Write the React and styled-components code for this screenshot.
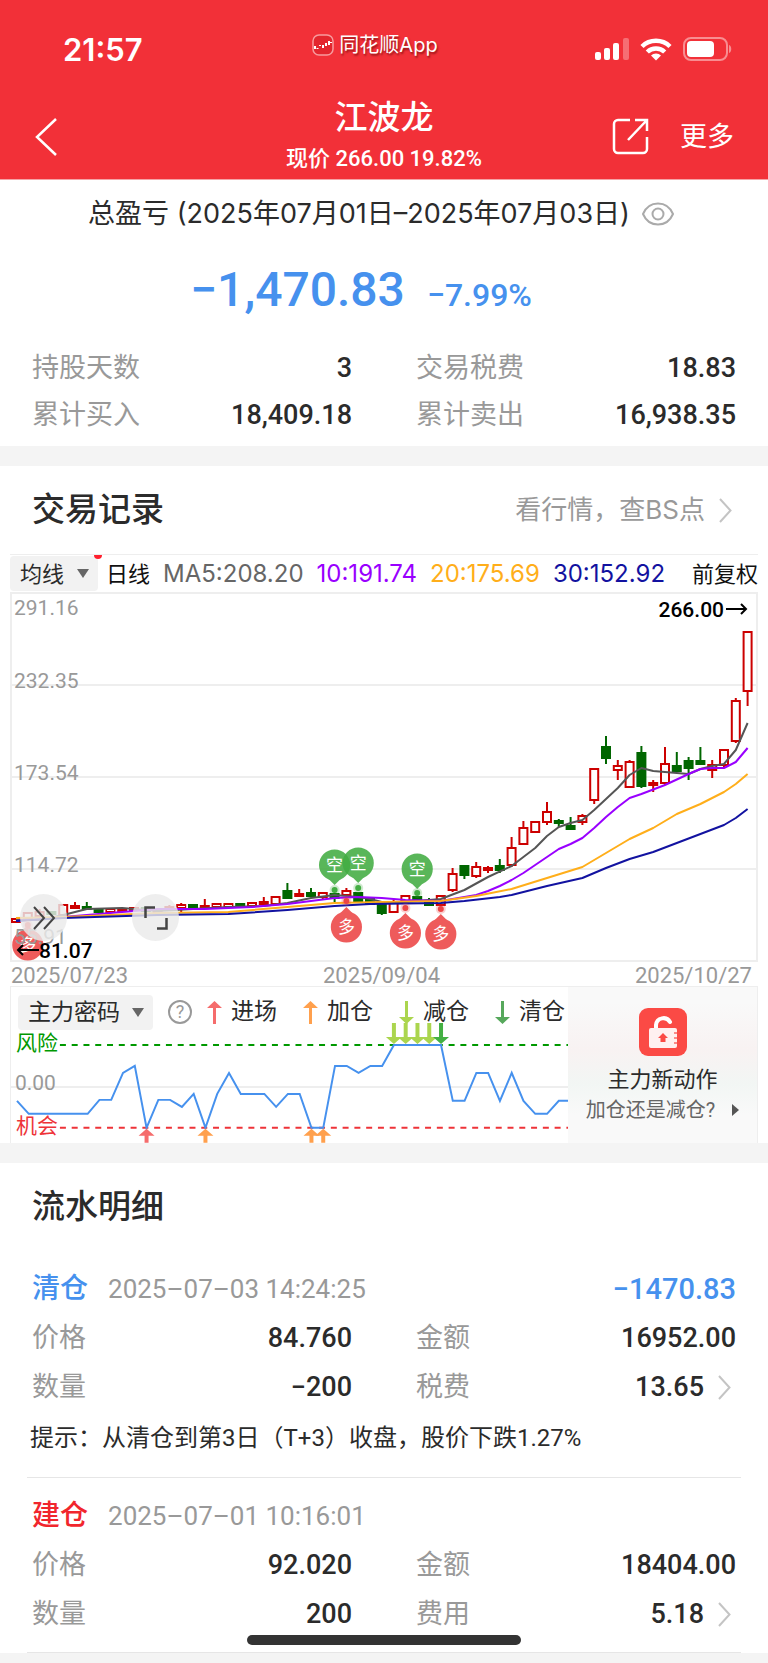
import { useState } from "react"
import styled, { createGlobalStyle } from "styled-components";

const GlobalStyle = createGlobalStyle`
* {
  box-sizing: border-box;
}
body {
  margin: 0;
  background: #f4f4f4;
  color: #2b2b2b;
  font-family: Roboto, "Noto Sans CJK SC", sans-serif;
}
h1, h2, p, dl, dd {
  margin: 0;
  font-weight: 400;
}
button, select {
  font-family: inherit;
  color: inherit;
  border: none;
  background: none;
  padding: 0;
  cursor: pointer;
}
svg {
  display: block;
  flex-shrink: 0;
}
`;

const Page = styled.div`
position: relative;
background: #f4f4f4;
padding-bottom: 9px;
`;

/* header */
const Header = styled.header`
background: #f23038;
color: white;
border-bottom: 1px solid #f5a3a6;
`;
const StatusBar = styled.div`
display: grid;
grid-template-columns: 1fr auto 1fr;
align-items: center;
height: 94px;
padding: 4px 36px 0;
`;
const Clock = styled.span`
padding-left: 27px;
font-family: Inter, sans-serif;
font-size: 31px;
font-weight: 600;
`;
const Brand = styled.div`
display: flex;
align-items: center;
gap: 5px;
padding-right: 18px;
padding-bottom: 8px;
font-family: Inter, "Noto Sans CJK SC", sans-serif;
font-size: 20px;
line-height: 28px;
text-shadow: 1px 2px 2px rgba(90, 0, 0, 0.6);
`;
const Signals = styled.div`
display: flex;
justify-content: flex-end;
align-items: center;
gap: 11px;
`;
const Nav = styled.nav`
display: grid;
grid-template-columns: 1fr auto 1fr;
align-items: center;
height: 85px;
padding: 0 34px;
`;
const NavTitle = styled.div`
text-align: center;
`;
const StockName = styled.h1`
font-size: 33px;
line-height: 44px;
font-weight: 500;
`;
const StockPrice = styled.p`
font-size: 22px;
line-height: 38px;
font-weight: 500;
`;
const NavActions = styled.div`
display: flex;
justify-content: flex-end;
align-items: center;
gap: 31px;
`;
const NavButton = styled.button`
font-size: 27px;
line-height: 40px;
`;

/* shared */
const Section = styled.section`
background: white;
margin-bottom: 20px;
`;
const SectionHead = styled.div`
display: flex;
justify-content: space-between;
align-items: center;
height: 88px;
padding: 0 36px 0 32px;
`;
const SectionTitle = styled.h2`
font-size: 33px;
line-height: 48px;
font-weight: 500;
`;
const MoreLink = styled.a`
display: flex;
align-items: center;
gap: 14px;
font-family: Inter, "Noto Sans CJK SC", sans-serif;
font-size: 26px;
line-height: 36px;
color: #999999;
text-decoration: none;
`;
const Stats = styled.dl`
display: grid;
grid-template-columns: 1fr 1fr;
column-gap: 64px;
padding: 0 32px;
`;
const Stat = styled.div`
display: flex;
justify-content: space-between;
align-items: center;
height: ${props => props.$height}px;
font-size: 27px;
line-height: 36px;
`;
const StatName = styled.dt`
color: #999999;
`;
const StatValue = styled.dd`
display: flex;
align-items: center;
gap: 14px;
font-size: 27px;
font-weight: 500;
`;
const FeeButton = styled.button`
display: flex;
align-items: center;
gap: 14px;
padding-right: 5px;
font-size: 27px;
font-weight: 500;
`;

/* summary */
const Summary = styled(Section)`
padding: 12px 0 8px;
`;
const Period = styled.div`
display: flex;
justify-content: center;
align-items: center;
gap: 12px;
padding-right: 6px;
font-family: Inter, "Noto Sans CJK SC", sans-serif;
font-size: 27px;
line-height: 44px;
`;
const Profit = styled.div`
display: flex;
justify-content: center;
align-items: baseline;
gap: 22px;
height: 60px;
margin: 24px 0;
padding-right: 46px;
color: #4691ee;
font-weight: 500;
font-size: 32px;
line-height: 60px;
`;
const ProfitValue = styled.span`
font-size: 48px;
`;

/* chart */
const ChartBox = styled.div`
margin: 0 10px;
border-top: 1px solid #eeeeee;
`;
const ChartBar = styled.div`
position: relative;
display: flex;
align-items: center;
height: 37px;
font-family: Inter, "Noto Sans CJK SC", sans-serif;
`;
const Picker = styled.label`
position: relative;
display: flex;
align-items: center;
flex-shrink: 0;
width: ${props => props.$width}px;
height: 35px;
border-radius: 4px;
background: #f2f2f2;
`;
const PickerSelect = styled.select`
appearance: none;
width: 100%;
height: 35px;
padding-left: 10px;
font-size: ${props => props.$size}px;
outline: none;
`;
const PickerCaret = styled.svg`
position: absolute;
right: 9px;
pointer-events: none;
`;
const NewDot = styled.i`
position: absolute;
left: 84px;
top: 0;
width: 8px;
height: 4px;
border-radius: 0 0 4px 4px;
background: #ff1f2e;
`;
const Averages = styled.div`
display: flex;
flex: 1;
align-items: center;
gap: 13px;
padding-left: 8px;
line-height: 32px;
white-space: nowrap;
`;
const Average = styled.span`
color: ${props => props.color};
font-size: 24px;
`;
const ChartMode = styled.span`
color: #111111;
font-size: 22px;
&:last-child{
   margin-left: auto;
}
`;
const Canvas = styled.div`
position: relative;
`;
const RoundButton = styled.button`
position: absolute;
left: ${props => props.$left}px;
bottom: 21px;
display: flex;
justify-content: center;
align-items: center;
width: 47px;
height: 47px;
border-radius: 50%;
background: rgba(234, 234, 234, 0.82);
`;
const Dates = styled.div`
display: flex;
justify-content: space-between;
height: 24px;
padding: 0 6px 0 1px;
color: #999999;
font-size: 22px;
line-height: 28px;
`;
const Indicator = styled.div`
display: grid;
grid-template-columns: minmax(0, 1fr) 189px;
border: 1px solid #eeeeee;
border-bottom: none;
`;
const Legend = styled.div`
display: flex;
align-items: center;
gap: 15px;
height: 43px;
padding: 7px 0 0 7px;
font-size: 23px;
line-height: 32px;
white-space: nowrap;
`;
const LegendItems = styled.div`
display: flex;
gap: 26px;
`;
const LegendItem = styled.span`
display: flex;
align-items: center;
gap: 9px;
`;
const HelpButton = styled.button`
flex-shrink: 0;
width: 24px;
height: 24px;
border: 2px solid #999999;
border-radius: 50%;
color: #999999;
font-size: 18px;
line-height: 20px;
`;
const Promo = styled.a`
display: flex;
flex-direction: column;
align-items: center;
padding-top: 21px;
background: linear-gradient(180deg, #f9f9f9 10%, #f8f2f2 40%, #f2f6f4 62%, #f9f9f9 82%);
color: #2b2b2b;
text-decoration: none;
`;
const PromoTitle = styled.span`
margin-top: 8px;
font-size: 22px;
line-height: 32px;
`;
const PromoText = styled.span`
display: flex;
align-items: center;
gap: 17px;
color: #666666;
font-size: 20px;
line-height: 28px;
`;

/* trade list */
const Trades = styled(Section)`
margin-bottom: 0;
`;
const Trade = styled.article`
padding-top: 13px;
padding-bottom: 14px;
background: linear-gradient(#e6e6e6, #e6e6e6) bottom / calc(100% - 54px) 1px no-repeat;
`;
const TradeHead = styled.div`
display: flex;
align-items: center;
height: 50px;
padding: 0 32px;
line-height: 36px;
`;
const TradeKind = styled.span`
color: ${props => props.color};
font-size: 28px;
font-weight: 500;
`;
const TradeTime = styled.time`
margin-left: 20px;
color: #999999;
font-size: 26px;
`;
const TradeProfit = styled.span`
margin-left: auto;
color: #4691ee;
font-size: 29px;
font-weight: 500;
`;
const Tip = styled.p`
padding: 0 30px;
font-size: 24px;
line-height: 52px;
`;
const HomeBar = styled.div`
position: absolute;
left: 50%;
bottom: 17px;
width: 274px;
height: 10px;
margin-left: -137px;
border-radius: 5px;
background: #333333;
`;

// [top, bottom, high, low, up] of every day
const candles = [
  [327, 330, 327, 330, 1], [321, 326, 321, 326, 1], [320, 324, 317, 324, 1], [320, 322, 320, 322, 0],
  [313, 323, 312, 323, 1], [314, 316, 310, 316, 1], [315, 317, 310, 317, 0], [317, 320, 317, 320, 0],
  [317, 320, 316, 320, 1], [317, 319, 317, 319, 1], [316, 318, 316, 318, 1], [316, 319, 316, 319, 0],
  [318, 320, 318, 320, 1], [315, 317, 313, 317, 1], [313, 316, 311, 321, 1], [313, 316, 313, 316, 0],
  [314, 316, 307, 316, 1], [312, 315, 312, 315, 1], [312, 315, 311, 315, 1], [312, 314, 311, 314, 0],
  [311, 314, 311, 314, 1], [310, 312, 305, 312, 1], [305, 312, 305, 312, 1], [299, 306, 291, 307, 0],
  [302, 304, 297, 304, 1], [301, 304, 296, 304, 0], [301, 305, 301, 307, 1], [302, 306, 302, 310, 0],
  [299, 303, 296, 303, 1], [301, 309, 301, 309, 0], [307, 312, 307, 312, 0], [313, 321, 310, 323, 0],
  [311, 320, 308, 320, 1], [304, 309, 304, 309, 1], [305, 308, 304, 308, 0], [311, 313, 306, 313, 0],
  [304, 313, 304, 313, 1], [282, 298, 276, 300, 1], [274, 283, 274, 287, 0], [275, 284, 270, 286, 1],
  [276, 278, 274, 281, 1], [274, 278, 267, 281, 0], [256, 273, 245, 275, 1], [236, 252, 229, 252, 1],
  [230, 240, 230, 240, 1], [220, 230, 210, 233, 1], [229, 231, 227, 235, 0], [234, 237, 225, 237, 0],
  [224, 230, 222, 233, 1], [177, 208, 177, 212, 1], [155, 166, 144, 172, 0], [174, 178, 168, 188, 1],
  [170, 195, 168, 195, 1], [161, 194, 154, 196, 0], [191, 193, 188, 200, 1], [172, 191, 155, 193, 1],
  [174, 179, 160, 179, 0], [169, 176, 165, 188, 0], [169, 172, 155, 172, 0], [173, 178, 168, 186, 1],
  [158, 173, 158, 176, 1], [109, 149, 106, 151, 1], [40, 99, 40, 114, 1],
];

// [day, y]
const ma5 = [[0, 328], [2, 328], [4, 323], [6, 317], [9, 316], [12, 319], [15, 317], [18, 315], [21, 314], [23, 311], [25, 306], [27, 303], [29, 305], [30, 307], [31, 310], [33, 310], [36, 307], [38, 298], [40, 285], [42, 274], [43, 265], [44, 256], [45, 244], [46, 235], [47, 231], [48, 228], [49, 218], [50, 207], [51, 196], [52, 183], [53, 176], [54, 179], [55, 180], [57, 182], [58, 177], [59, 174], [60, 172], [61, 158], [62, 131]];
const ma10 = [[0, 329], [4, 325], [8, 321], [12, 317], [16, 317], [20, 315], [23, 312], [25, 309], [27, 306], [29, 305], [31, 306], [33, 308], [36, 309], [38, 305], [39, 303], [40, 299], [41, 294], [42, 288], [43, 281], [44, 273], [45, 265], [46, 257], [47, 252], [48, 246], [49, 236], [50, 225], [51, 215], [52, 206], [53, 202], [55, 193], [57, 182], [58, 177], [59, 176], [60, 176], [61, 170], [62, 156]];
const ma20 = [[0, 326], [4, 325], [12, 321], [18, 320], [23, 315], [27, 311], [31, 310], [36, 309], [39, 304], [42, 297], [45, 286], [48, 275], [50, 261], [52, 247], [54, 236], [56, 222], [58, 212], [59, 206], [60, 200], [61, 192], [62, 182]];
const ma30 = [[0, 329], [4, 326], [12, 323], [18, 322], [23, 318], [27, 314], [30, 312], [36, 311], [38, 309], [41, 305], [42, 303], [45, 294], [48, 286], [50, 276], [52, 267], [54, 260], [56, 251], [58, 242], [60, 233], [61, 226], [62, 217]];

const force = [[0, 71], [1, 84], [6, 84], [7, 70], [8, 70], [9, 43], [10, 36], [11, 98], [12, 70], [13, 70], [14, 77], [15, 64], [16, 98], [17, 64], [18, 43], [19, 64], [21, 64], [22, 77], [23, 64], [24, 64], [25, 98], [26, 98], [27, 36], [28, 36], [29, 43], [30, 36], [31, 36], [32, 15], [36, 15], [37, 71], [38, 71], [39, 43], [40, 43], [41, 71], [42, 43], [43, 71], [44, 84], [45, 84], [46, 71], [47, 71]];

// [day, circle y, dot y]
const shorts = [[27, 273, 298], [29, 271, 296], [34, 277, 301]];
const longs = [[1, 353, 333], [28, 335, 309], [33, 341, 316], [36, 342, 317]];

const dayX = (day) => day * 11.8 + 6;
const toPoints = (list) => list.map(([day, y]) => `${dayX(day)},${y}`).join(" ");

const trades = [
  {
    kind: "清仓", color: "#4691ee", time: "2025–07–03 14:24:25", profit: "−1470.83",
    price: "84.760", amount: "16952.00", count: "−200", feeName: "税费", fee: "13.65",
    tip: "提示：从清仓到第3日（T+3）收盘，股价下跌1.27%",
  },
  {
    kind: "建仓", color: "#f1262d", time: "2025–07–01 10:16:01",
    price: "92.020", amount: "18404.00", count: "200", feeName: "费用", fee: "5.18",
  },
];

function Chevron() {
  return <svg width="13" height="25" viewBox="0 0 13 25" fill="none" stroke="#c4c4c4" strokeWidth="2">
    <path d="M1 1 L11.5 12.5 L1 24" />
  </svg>
}

function Arrow({ color, down }) {
  return <svg width="15" height="23" viewBox="0 0 15 23" fill={color}>
    <path d={down ? "M6 0h3v16h6L7.500 23L0 16h6z" : "M6 23h3V7h6L7.500 0L0 7h6z"} />
  </svg>
}

function Marker({ day, y, dot, long }) {
  const x = dayX(day);
  const color = long ? "#ec4545" : "#43ad43";
  const side = long ? -1 : 1;
  return <g>
    <g fill={color} opacity="0.88">
      <circle cx={x} cy={y} r="15.600" />
      <path d={`M${x - 6} ${y + side * 14} L${x} ${y + side * 20} L${x + 6} ${y + side * 14}z`} />
    </g>
    <circle cx={x} cy={dot} r="5" fill={color} opacity="0.25" />
    <circle cx={x} cy={dot} r="3" fill={color} />
    <text x={x} y={y + 6} fill="white" fontSize="17" textAnchor="middle">{long ? "多" : "空"}</text>
  </g>
}

function PriceChart() {
  return <svg width="100%" viewBox="0 0 748 370" fill="none" fontSize="21">
    <rect x="1" y="1" width="746" height="368" stroke="#eeeeee" strokeWidth="2" />
    <path d="M1 93H747M1 185H747M1 277H747" stroke="#eeeeee" strokeWidth="2" />
    {candles.map(([top, bottom, high, low, up], day) => {
      const x = dayX(day);
      const color = up ? "#cc0000" : "#006600";
      return <g key={day} stroke={color} strokeWidth="2">
        <path d={`M${x} ${high}V${top}M${x} ${bottom}V${low}`} />
        <rect x={x - 4} y={top} width="8" height={bottom - top} fill={up ? "white" : color} />
      </g>
    })}
    <g strokeWidth="2" strokeLinejoin="round">
      <polyline points={toPoints(ma5)} stroke="#555555" />
      <polyline points={toPoints(ma10)} stroke="#9900ff" />
      <polyline points={toPoints(ma20)} stroke="#ffae1a" />
      <polyline points={toPoints(ma30)} stroke="#1212a0" />
    </g>
    {shorts.map(([day, y, dot]) => <Marker key={day} day={day} y={y} dot={dot} />)}
    {longs.map(([day, y, dot]) => <Marker key={day} day={day} y={y} dot={dot} long />)}
    <g fill="#999999">
      <text x="4" y="23">291.16</text>
      <text x="4" y="96">232.35</text>
      <text x="4" y="188">173.54</text>
      <text x="4" y="280">114.72</text>
      <text x="4" y="352">55.91</text>
    </g>
    <g fill="black" fontWeight="500">
      <text x="29" y="366">81.07</text>
      <text x="714" y="25" textAnchor="end">266.00</text>
    </g>
    <path d="M29 358H8M13 353L8 358L13 363M716 17H736M731 12L736 17L731 22" stroke="black" strokeWidth="2" />
  </svg>
}

function ForceChart() {
  return <svg width="100%" viewBox="0 0 558 113" fill="none" fontSize="21" overflow="visible">
    <path d="M0 57H558" stroke="#eeeeee" strokeWidth="2" />
    <path d="M49 15H558" stroke="#009900" strokeWidth="2" strokeDasharray="6 5.8" />
    <path d="M49 98H558" stroke="#ee3338" strokeWidth="2" strokeDasharray="6 5.8" />
    <polyline points={toPoints(force)} stroke="#4691ee" strokeWidth="2" />
    <text x="5" y="20" fill="#009900">风险</text>
    <text x="4" y="60" fill="#999999">0.00</text>
    <text x="5" y="103" fill="#ee3338">机会</text>
    {[11, 16, 25, 26].map((day) => (
      <path key={day} transform={`translate(${dayX(day)} 99)`} fill={day === 11 ? "#f56c6c" : "#ffa04d"} d="M0 0L8 7H2V14H-2V7H-8z" />
    ))}
    {[32, 33, 34, 35, 36].map((day) => (
      <path key={day} transform={`translate(${dayX(day)} -7)`} fill={day === 36 ? "#43b043" : "#abd54e"} d="M-2 0H2V14H8L0 21L-8 14H-2z" />
    ))}
  </svg>
}

function LineTypePicker({ label, options, width, size }) {
  const [value, setValue] = useState(options[0])
  return <Picker $width={width}>
    <PickerSelect $size={size} aria-label={label} value={value} onChange={(e) => setValue(e.target.value)}>
      {options.map((o) => <option key={o}>{o}</option>)}
    </PickerSelect>
    <PickerCaret width="12" height="9" viewBox="0 0 12 9" fill="#666666"><path d="M0 0H12L6 9z" /></PickerCaret>
  </Picker>
}

function TradeItem({ trade }) {
  return <Trade>
    <TradeHead>
      <TradeKind color={trade.color}>{trade.kind}</TradeKind>
      <TradeTime>{trade.time}</TradeTime>
      {trade.profit && <TradeProfit>{trade.profit}</TradeProfit>}
    </TradeHead>
    <Stats>
      <Stat $height={49}><StatName>价格</StatName><StatValue>{trade.price}</StatValue></Stat>
      <Stat $height={49}><StatName>金额</StatName><StatValue>{trade.amount}</StatValue></Stat>
      <Stat $height={49}><StatName>数量</StatName><StatValue>{trade.count}</StatValue></Stat>
      <Stat $height={49}>
        <StatName>{trade.feeName}</StatName>
        <StatValue><FeeButton>{trade.fee}<Chevron /></FeeButton></StatValue>
      </Stat>
    </Stats>
    {trade.tip && <Tip>{trade.tip}</Tip>}
  </Trade>
}

export default function App() {
  return <Page>
    <GlobalStyle />
    <Header>
      <StatusBar>
        <Clock>21:57</Clock>
        <Brand>
          <svg width="22" height="22" viewBox="0 0 22 22" fill="none">
            <rect x="1" y="1" width="20" height="20" rx="6" fill="#e3262e" stroke="#f79a9d" strokeWidth="1.500" />
            <path d="M3 12v3M5.500 14v1M8 11v1M11 11v3M14 9v3M17 7v4M19 8v1" stroke="white" strokeWidth="2" />
          </svg>
          同花顺App
        </Brand>
        <Signals>
          <svg width="34" height="22" viewBox="0 0 34 22" fill="white">
            <rect x="0" y="14" width="6" height="8" rx="2" />
            <rect x="9" y="10" width="6" height="12" rx="2" />
            <rect x="18" y="5" width="6" height="17" rx="2" />
            <rect x="28" y="0" width="6" height="22" rx="2" opacity="0.3" />
          </svg>
          <svg width="32" height="24" viewBox="0 0 32 24" fill="none" stroke="white" strokeWidth="4.500">
            <path d="M2 9.500a20 20 0 0 1 28 0M7.300 15a12.500 12.500 0 0 1 17.400 0" />
            <path d="M16 23.500l-5-5a7 7 0 0 1 10 0z" fill="white" stroke="none" />
          </svg>
          <svg width="49" height="24" viewBox="0 0 49 24" fill="none">
            <rect x="1" y="1" width="43" height="22" rx="7" stroke="white" strokeOpacity="0.45" strokeWidth="2" />
            <rect x="4" y="4" width="27" height="16" rx="4" fill="white" />
            <path d="M46 8c3 1 3 7 0 8z" fill="white" fillOpacity="0.45" />
          </svg>
        </Signals>
      </StatusBar>
      <Nav>
        <NavButton aria-label="返回">
          <svg width="25" height="38" viewBox="0 0 25 38" fill="none" stroke="white" strokeWidth="2.500">
            <path d="M22 1L3 19L22 37" />
          </svg>
        </NavButton>
        <NavTitle>
          <StockName>江波龙</StockName>
          <StockPrice>现价 266.00 19.82%</StockPrice>
        </NavTitle>
        <NavActions>
          <NavButton aria-label="分享">
            <svg width="37" height="37" viewBox="0 0 37 37" fill="none" stroke="white" strokeWidth="2.500">
              <path d="M18 2H6a4 4 0 0 0-4 4v25a4 4 0 0 0 4 4h25a4 4 0 0 0 4-4V19" />
              <path d="M23 2H35V13M35 2L16 22" />
            </svg>
          </NavButton>
          <NavButton>更多</NavButton>
        </NavActions>
      </Nav>
    </Header>

    <Summary>
      <Period>
        总盈亏 (2025年07月01日–2025年07月03日)
        <NavButton aria-label="隐藏金额">
          <svg width="32" height="24" viewBox="0 0 32 24" fill="none" stroke="#aaaaaa" strokeWidth="2">
            <path d="M1 12C4 5 9 1.500 16 1.500S28 5 31 12C28 19 23 22.500 16 22.500S4 19 1 12z" />
            <circle cx="16" cy="12" r="5.500" />
          </svg>
        </NavButton>
      </Period>
      <Profit>
        <ProfitValue>−1,470.83</ProfitValue>
        <span>−7.99%</span>
      </Profit>
      <Stats>
        <Stat $height={47}><StatName>持股天数</StatName><StatValue>3</StatValue></Stat>
        <Stat $height={47}><StatName>交易税费</StatName><StatValue>18.83</StatValue></Stat>
        <Stat $height={47}><StatName>累计买入</StatName><StatValue>18,409.18</StatValue></Stat>
        <Stat $height={47}><StatName>累计卖出</StatName><StatValue>16,938.35</StatValue></Stat>
      </Stats>
    </Summary>

    <Section>
      <SectionHead>
        <SectionTitle>交易记录</SectionTitle>
        <MoreLink href="#quote">看行情，查BS点<Chevron /></MoreLink>
      </SectionHead>
      <ChartBox>
        <ChartBar>
          <LineTypePicker label="指标" options={["均线"]} width={88} size={22} />
          <NewDot />
          <Averages>
            <ChartMode>日线</ChartMode>
            <Average color="#666666">MA5:208.20</Average>
            <Average color="#9900ff">10:191.74</Average>
            <Average color="#ffae1a">20:175.69</Average>
            <Average color="#1212a0">30:152.92</Average>
            <ChartMode>前复权</ChartMode>
          </Averages>
        </ChartBar>
        <Canvas>
          <PriceChart />
          <RoundButton $left={10} aria-label="展开">
            <svg width="24" height="24" viewBox="0 0 24 24" fill="none" stroke="#444444" strokeWidth="2">
              <path d="M2 1L12 12L2 23M12 1L22 12L12 23" />
            </svg>
          </RoundButton>
          <RoundButton $left={122} aria-label="全屏">
            <svg width="24" height="24" viewBox="0 0 24 24" fill="none" stroke="#444444" strokeWidth="2.500">
              <path d="M1.500 12V1.500H11M22.500 12V22.500H13" />
            </svg>
          </RoundButton>
        </Canvas>
        <Dates>
          <span>2025/07/23</span>
          <span>2025/09/04</span>
          <span>2025/10/27</span>
        </Dates>
        <Indicator>
          <div>
            <Legend>
              <LineTypePicker label="副图指标" options={["主力密码"]} width={135} size={23} />
              <HelpButton aria-label="说明">?</HelpButton>
              <LegendItems>
                <LegendItem><Arrow color="#f56c6c" />进场</LegendItem>
                <LegendItem><Arrow color="#ffa04d" />加仓</LegendItem>
                <LegendItem><Arrow color="#abd54e" down />减仓</LegendItem>
                <LegendItem><Arrow color="#57a85c" down />清仓</LegendItem>
              </LegendItems>
            </Legend>
            <ForceChart />
          </div>
          <Promo href="#force">
            <svg width="48" height="48" viewBox="0 0 48 48" fill="none">
              <rect width="48" height="48" rx="9" fill="#fb4a45" />
              <path d="M17 21V17a7.500 7.500 0 0 1 14 -3" stroke="white" strokeWidth="4" strokeLinecap="round" />
              <rect x="10" y="20" width="28" height="20" rx="2" fill="#fff0f0" />
              <path d="M24 25l5 5h-2.500v4h-5v-4H19z" fill="#fb4a45" />
              <path d="M35 25h3M35 30h3M35 35h3" stroke="#fb8a87" strokeWidth="2" />
            </svg>
            <PromoTitle>主力新动作</PromoTitle>
            <PromoText>
              加仓还是减仓?
              <svg width="7" height="12" viewBox="0 0 7 12" fill="#555555"><path d="M0 0L7 6L0 12z" /></svg>
            </PromoText>
          </Promo>
        </Indicator>
      </ChartBox>
    </Section>

    <Trades>
      <SectionHead>
        <SectionTitle>流水明细</SectionTitle>
      </SectionHead>
      {trades.map((trade) => <TradeItem key={trade.time} trade={trade} />)}
    </Trades>
    <HomeBar />
  </Page>
}
